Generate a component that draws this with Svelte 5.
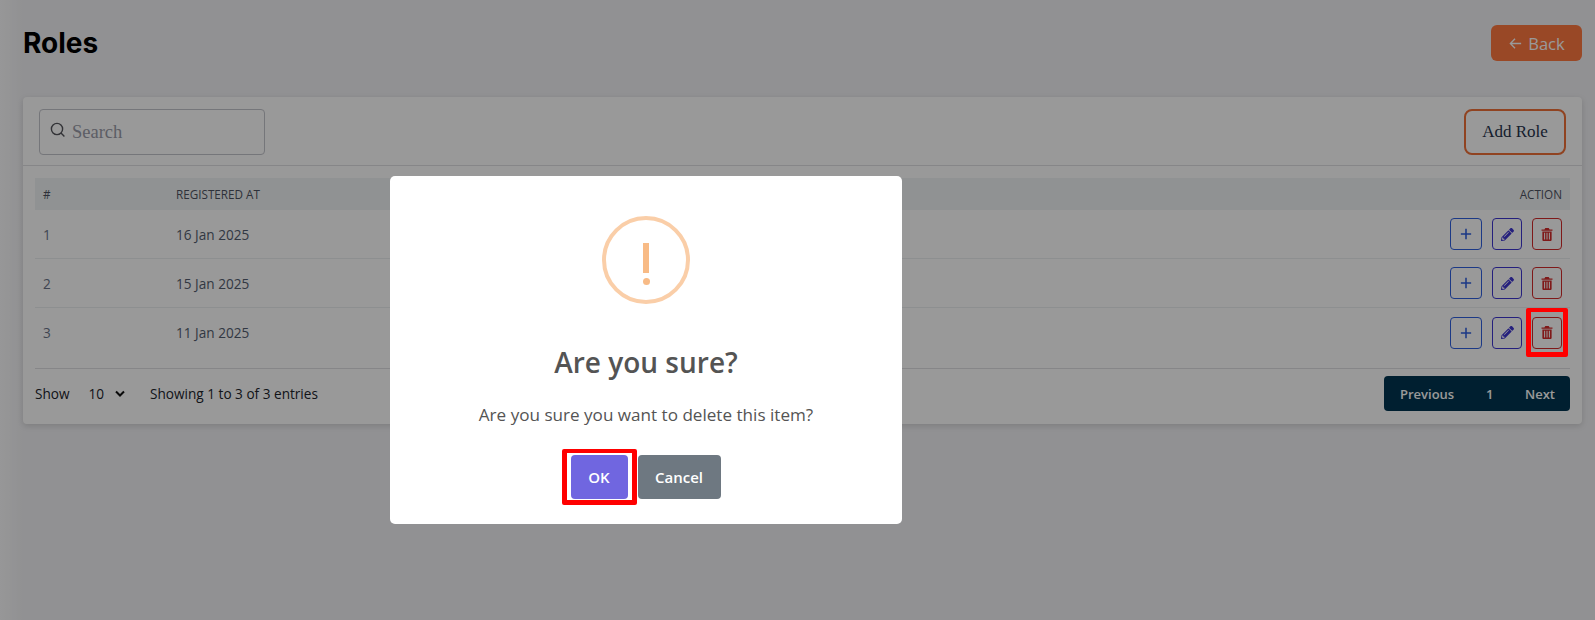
<script>
  const rows = [
    { n: 1, date: '16 Jan 2025' },
    { n: 2, date: '15 Jan 2025' },
    { n: 3, date: '11 Jan 2025' }
  ];
</script>

<div class="page">
  <header class="top">
    <h1>Roles</h1>
    <button class="back">
      <svg width="15" height="15" viewBox="0 0 16 16" fill="none" stroke="currentColor" stroke-width="1.4"><path d="M14 8H2.5M7.5 3 2.5 8l5 5" /></svg>
      Back
    </button>
  </header>

  <section class="card">
    <div class="toolbar">
      <div class="search">
        <svg width="16" height="16" viewBox="0 0 16 16" fill="none" stroke="#55565c" stroke-width="1.4"><circle cx="7" cy="7" r="5.6" /><path d="m11 11 3.4 3.4" /></svg>
        <span>Search</span>
      </div>
      <button class="add">Add Role</button>
    </div>

    <div class="tablewrap">
      <div class="row head">
        <span>#</span>
        <span>REGISTERED AT</span>
        <span class="right">ACTION</span>
      </div>
      {#each rows as r}
        <div class="row">
          <span class="num">{r.n}</span>
          <span class="date">{r.date}</span>
          <div class="actions">
            <button class="ic plus" aria-label="add">
              <svg width="12" height="12" viewBox="0 0 14 14" fill="none" stroke="currentColor" stroke-width="1.8"><path d="M7 1v12M1 7h12" /></svg>
            </button>
            <button class="ic edit" aria-label="edit">
              <svg width="13" height="13" viewBox="0 0 512 512" fill="currentColor"><path d="M497.9 142.1l-46.1 46.1c-4.7 4.7-12.3 4.7-17 0l-111-111c-4.7-4.7-4.7-12.3 0-17l46.1-46.1c18.7-18.7 49.1-18.7 67.9 0l60.1 60.1c18.8 18.7 18.8 49.1 0 67.9zM284.2 99.8L21.6 362.4.4 483.9c-2.9 16.4 11.4 30.6 27.8 27.8l121.5-21.3 262.6-262.6c4.7-4.7 4.7-12.3 0-17l-111-111c-4.8-4.7-12.4-4.7-17.1 0zM124.1 339.9c-5.5-5.5-5.5-14.3 0-19.8l154-154c5.5-5.5 14.3-5.5 19.8 0s5.5 14.3 0 19.8l-154 154c-5.5 5.5-14.3 5.5-19.8 0zM88 424h48v36.3l-64.5 11.3-31.1-31.1L51.7 376H88v48z" /></svg>
            </button>
            <button class="ic del" aria-label="delete">
              <svg width="12" height="13" viewBox="0 0 14 15" fill="currentColor"><path d="M5 0h4l1 1.6h3.4V3H.6V1.6H4zM1.6 4h10.8v9.5c0 .8-.6 1.5-1.4 1.5H3c-.8 0-1.4-.7-1.4-1.5zm2 1.6v7.8h1.2V5.6zm2.8 0v7.8h1.2V5.6zm2.8 0v7.8h1.2V5.6z" /></svg>
            </button>
          </div>
        </div>
      {/each}
    </div>

    <div class="foot">
      <div class="left">
        <span>Show</span>
        <span class="sel">10
          <svg width="10" height="8" viewBox="0 0 10 8" fill="none" stroke="#111" stroke-width="2"><path d="m1 1.5 4 4 4-4" /></svg>
        </span>
        <span>Showing 1 to 3 of 3 entries</span>
      </div>
      <div class="pager">
        <span>Previous</span><span>1</span><span>Next</span>
      </div>
    </div>
  </section>
</div>

<div class="overlay"></div>
<div class="mark mark-del"></div>

<div class="modal">
  <div class="warn"><span class="bar"></span><span class="dot"></span></div>
  <h2>Are you sure?</h2>
  <p>Are you sure you want to delete this item?</p>
  <div class="btns">
    <button class="ok">OK</button>
    <button class="cancel">Cancel</button>
  </div>
</div>
<div class="mark mark-ok"></div>

<style>
  :global(body) {
    margin: 0;
    background: #f2f2f5;
    font-family: "Open Sans", "Noto Sans", sans-serif;
    overflow: hidden;
  }
  button { font-family: inherit; cursor: pointer; }
  .page {
    height: 620px;
    box-sizing: border-box;
    padding: 25px 13px 0 23px;
    background: linear-gradient(90deg, #fcfcfd 0, #f2f2f5 22px);
  }
  .top {
    display: flex;
    justify-content: space-between;
    height: 36px;
    margin-bottom: 36px;
  }
  h1 {
    margin: 0;
    font: 700 28px/36px Inter, sans-serif;
    color: #000;
  }
  .back {
    width: 91px;
    height: 36px;
    border: 0;
    border-radius: 6px;
    background: #ff7840;
    color: #fff;
    display: flex;
    align-items: center;
    justify-content: center;
    gap: 5px;
    font-size: 16.5px;
    padding: 0;
  }
  .card {
    height: 327px;
    background: #fff;
    border-radius: 4px;
    box-shadow: 0 2px 6px rgba(0, 0, 0, .14);
  }
  .toolbar {
    height: 69px;
    box-sizing: border-box;
    padding: 12px 16px 10px;
    display: flex;
    justify-content: space-between;
    border-bottom: 1px solid #dfe0e3;
  }
  .search {
    width: 226px;
    height: 46px;
    box-sizing: border-box;
    border: 1px solid #c3c5cc;
    border-radius: 4px;
    display: flex;
    align-items: center;
    gap: 6px;
    padding: 0 10px;
    font: 18.5px "Liberation Serif", serif;
    color: #9a9ca8;
  }
  .search svg { margin-top: -4px; }
  .add {
    width: 102px;
    height: 46px;
    box-sizing: border-box;
    border: 2px solid #f07038;
    border-radius: 8px;
    background: transparent;
    color: #26324c;
    font: 17px "Liberation Serif", serif;
    padding: 0;
  }
  .tablewrap {
    margin: 12px 12px 0;
    height: 191px;
    box-sizing: border-box;
    border-bottom: 1px solid #dfe0e3;
  }
  .row {
    display: grid;
    grid-template-columns: 133px 1fr auto;
    align-items: center;
    height: 49px;
    box-sizing: border-box;
    padding: 0 8px;
    border-bottom: 1px solid #eceef1;
    font-size: 13.6px;
    color: #545e70;
  }
  .row:last-child { border-bottom: 0; }
  .head {
    height: 32px;
    background: #f1f3f6;
    border: 0;
    font-size: 11.7px;
    font-weight: 500;
    color: #4d5361;
  }
  .right { text-align: right; }
  .num { color: #6a7488; }
  .date { color: #545e70; }
  .actions { display: flex; gap: 10px; }
  .ic {
    width: 30px;
    height: 32px;
    box-sizing: border-box;
    border-radius: 4px;
    background: transparent;
    display: flex;
    align-items: center;
    justify-content: center;
    padding: 0;
    border: 1px solid currentColor;
  }
  .plus { color: #2f5fe0; width: 32px; }
  .edit { color: #3f36d0; }
  .del { color: #d42a2a; }
  .foot {
    display: flex;
    justify-content: space-between;
    align-items: center;
    padding: 7px 12px 0;
  }
  .left {
    display: flex;
    align-items: center;
    font-size: 13.6px;
    color: #20242c;
  }
  .sel {
    display: flex;
    align-items: center;
    gap: 11px;
    margin: 0 25px 0 19px;
  }
  .pager {
    width: 186px;
    height: 35px;
    box-sizing: border-box;
    background: #003550;
    border-radius: 4px;
    display: flex;
    justify-content: space-between;
    align-items: center;
    padding: 0 15px 0 16px;
    font-size: 13px;
    font-weight: 600;
    color: #fff;
  }
  .overlay {
    position: fixed;
    inset: 0;
    background: rgba(0, 0, 0, .4);
  }
  .modal {
    position: fixed;
    left: 390px;
    top: 176px;
    width: 512px;
    height: 348px;
    background: #fff;
    border-radius: 5px;
    display: flex;
    flex-direction: column;
    align-items: center;
    box-sizing: border-box;
    padding-top: 40px;
  }
  .warn {
    width: 88px;
    height: 88px;
    box-sizing: border-box;
    border: 4px solid #facea8;
    border-radius: 50%;
    display: flex;
    flex-direction: column;
    align-items: center;
    padding-top: 23px;
  }
  .bar { width: 6px; height: 30px; background: #f8bb86; }
  .dot { width: 7px; height: 7px; margin-top: 5px; border-radius: 50%; background: #f8bb86; }
  h2 {
    margin: 40px 0 0;
    font-size: 28px;
    line-height: 36px;
    font-weight: 600;
    color: #545454;
  }
  p {
    margin: 23px 0 0;
    font-size: 17.1px;
    line-height: 24px;
    color: #545454;
  }
  .btns {
    display: flex;
    gap: 10px;
    margin-top: 28px;
    margin-left: -1px;
  }
  .ok, .cancel {
    height: 44px;
    border: 0;
    border-radius: 4px;
    color: #fff;
    font-size: 15px;
    font-weight: 600;
    padding: 0;
  }
  .ok { width: 57px; background: #7066e0; }
  .cancel { width: 83px; background: #6e7881; }
  .mark {
    position: fixed;
    box-sizing: border-box;
    border-style: solid;
    border-color: #f00;
    border-width: 4px 5px 5px;
    border-radius: 2px;
  }
  .mark-del { left: 1526px; top: 308px; width: 42px; height: 49px; }
  .mark-ok { left: 562px; top: 449px; width: 75px; height: 56px; }
</style>
